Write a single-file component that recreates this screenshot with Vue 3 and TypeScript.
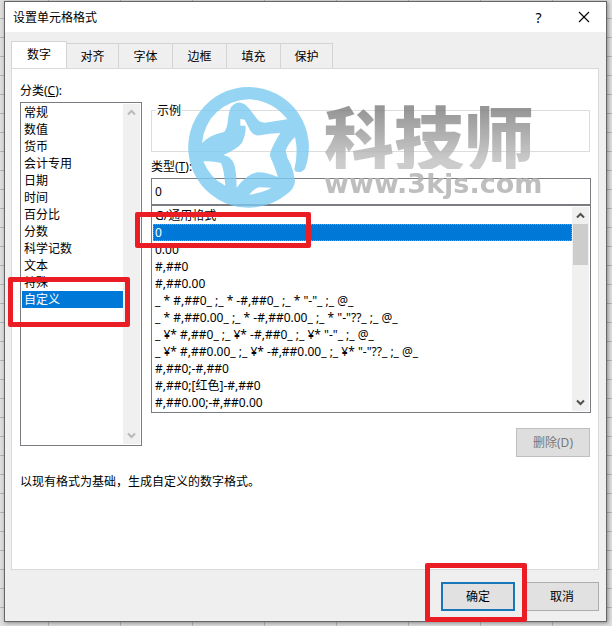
<script setup lang="ts">
import { ref } from 'vue'

const tabs: string[] = ['数字', '对齐', '字体', '边框', '填充', '保护']
const categories: string[] = [
  '常规', '数值', '货币', '会计专用', '日期', '时间',
  '百分比', '分数', '科学记数', '文本', '特殊', '自定义',
]
const formats: string[] = [
  'G/通用格式',
  '0',
  '0.00',
  '#,##0',
  '#,##0.00',
  '_ * #,##0_ ;_ * -#,##0_ ;_ * "-"_ ;_ @_ ',
  '_ * #,##0.00_ ;_ * -#,##0.00_ ;_ * "-"??_ ;_ @_ ',
  '_ ¥* #,##0_ ;_ ¥* -#,##0_ ;_ ¥* "-"_ ;_ @_ ',
  '_ ¥* #,##0.00_ ;_ ¥* -#,##0.00_ ;_ ¥* "-"??_ ;_ @_ ',
  '#,##0;-#,##0',
  '#,##0;[红色]-#,##0',
  '#,##0.00;-#,##0.00',
]

const activeTab = ref('数字')
const category = ref('自定义')
const format = ref('0')
</script>

<template>
  <div class="sheet">
    <section class="dialog" role="dialog" aria-labelledby="dialog-title">
      <header class="titlebar">
        <h1 id="dialog-title">设置单元格格式</h1>
        <button type="button" class="caption help">?</button>
        <button type="button" class="caption" aria-label="关闭">
          <svg width="12" height="12" viewBox="0 0 12 12"><path d="M1 1 11 11M11 1 1 11" /></svg>
        </button>
      </header>

      <div class="body">
        <div class="tabs" role="tablist">
          <button
            v-for="tab in tabs"
            :key="tab"
            type="button"
            role="tab"
            class="tab"
            :class="{ active: tab === activeTab }"
            :aria-selected="tab === activeTab"
            @click="activeTab = tab"
          >{{ tab }}</button>
        </div>

        <div class="panel" role="tabpanel">
          <div class="columns">
            <div class="left">
              <span id="cat-label" class="cat-label">分类(<u>C</u>):</span>
              <div class="listbox categories">
                <ul role="listbox" aria-labelledby="cat-label" tabindex="0">
                  <li
                    v-for="item in categories"
                    :key="item"
                    role="option"
                    :class="{ selected: item === category }"
                    :aria-selected="item === category"
                    @click="category = item"
                  >{{ item }}</li>
                </ul>
                <div class="scroll idle">
                  <button type="button" aria-label="向上滚动"><svg width="9" height="7" viewBox="0 0 9 7"><path d="M1 5.500 4.500 2 8 5.500" /></svg></button>
                  <button type="button" aria-label="向下滚动"><svg width="9" height="7" viewBox="0 0 9 7"><path d="M1 1.500 4.500 5 8 1.500" /></svg></button>
                </div>
                <div class="mark mark-category"></div>
              </div>
            </div>

            <div class="right">
              <fieldset class="sample"><legend>示例</legend></fieldset>
              <label class="type-label" for="type-input">类型(<u>T</u>):</label>
              <input id="type-input" v-model="format" class="type-input" type="text" />
              <div class="listbox formats">
                <ul role="listbox" aria-label="类型" tabindex="0">
                  <li
                    v-for="item in formats"
                    :key="item"
                    role="option"
                    :class="{ selected: item === format }"
                    :aria-selected="item === format"
                    @click="format = item"
                  >{{ item }}</li>
                </ul>
                <div class="scroll">
                  <button type="button" aria-label="向上滚动"><svg width="9" height="7" viewBox="0 0 9 7"><path d="M1 5.500 4.500 2 8 5.500" /></svg></button>
                  <div class="thumb"></div>
                  <button type="button" aria-label="向下滚动"><svg width="9" height="7" viewBox="0 0 9 7"><path d="M1 1.500 4.500 5 8 1.500" /></svg></button>
                </div>
                <div class="mark mark-format"></div>
              </div>
              <button type="button" class="btn delete" disabled>删除(D)</button>

              <div class="watermark" aria-hidden="true">
                <svg class="logo" viewBox="0 0 384 384">
                  <path
                    fill-rule="evenodd"
                    d="M357 260Q348 271 336 270Q327 270 325 263Q334 225 331 190L327 165Q306 185 299 206Q302 228 314 247Q324 270 327 298Q325 322 300 338A181 181 0 1 1 357 260Z
                       M48 183A142 142 0 0 1 188 52Q258 54 304 112L236 122Q222 122 214 112L190 80Q165 50 142 68Q130 76 127 105Q124 145 112 151Q75 157 48 183Z
                       M163 111V131H178Q182 150 168 182Q155 200 112 219Q138 225 145 248Q151 265 152 317Q185 274 215 271Q240 270 276 285Q266 254 252 222Q250 206 283 153Q250 154 222 160Q204 162 193 146L176 113Z
                       M52 238Q80 236 105 243Q114 262 118 311Q72 289 52 238Z
                       M190 338Q205 317 222 316L256 317Q238 330 190 338Z"
                  />
                </svg>
                <div class="wordmark">
                  <span class="brand">科技师</span>
                  <span class="site">www.3kjs.com</span>
                </div>
              </div>
            </div>
          </div>
          <p class="hint">以现有格式为基础，生成自定义的数字格式。</p>
        </div>

        <footer class="actions">
          <div class="ok-wrap">
            <button type="button" class="btn primary">确定</button>
            <div class="mark mark-ok"></div>
          </div>
          <button type="button" class="btn cancel">取消</button>
        </footer>
      </div>
    </section>
  </div>
</template>

<style>
body {
  margin: 0;
}
</style>

<style scoped>
* {
  box-sizing: border-box;
}

.sheet {
  display: flex;
  min-height: 100vh;
  padding: 1px 5px 4px 4px;
  background-color: #dedede;
  background-image:
    linear-gradient(to right, #b4b4b4 1px, transparent 1px),
    linear-gradient(#b4b4b4 1px, transparent 1px);
  background-size: 72px 19px;
  background-position: 48px 18px;
  color: #000;
  font: 12px/17px "Noto Sans", "Noto Sans CJK SC", sans-serif;
}

button,
input {
  font: inherit;
  color: inherit;
}

.dialog {
  flex: 1;
  display: flex;
  flex-direction: column;
  min-width: 0;
  border: 1px solid #666;
  background: #efefef;
  box-shadow: 1px 1px 4px rgba(0, 0, 0, 0.4);
}

.titlebar {
  display: flex;
  align-items: center;
  height: 30px;
  padding-left: 8px;
  background: #fff;
}

.titlebar h1 {
  flex: 1;
  margin: 0;
  font: inherit;
}

.caption {
  display: grid;
  place-items: center;
  width: 45px;
  height: 30px;
  padding: 0;
  border: 0;
  background: transparent;
}

.help {
  font-size: 14px;
}

.caption path {
  fill: none;
  stroke: #000;
  stroke-width: 1.1;
}

.body {
  flex: 1;
  display: flex;
  flex-direction: column;
  padding: 9px 7px 10px 6px;
}

.tabs {
  display: flex;
  align-items: flex-end;
  margin-bottom: -1px;
}

.tab {
  width: 54px;
  height: 26px;
  padding: 0;
  border: 1px solid #d4d4d4;
  border-left-width: 0;
  background: #efefef;
}

.tab.active {
  width: 56px;
  height: 28px;
  padding-bottom: 1px;
  border-left-width: 1px;
  border-bottom-color: #fff;
  background: #fff;
}

.tab:nth-child(2),
.tab:last-child {
  width: 52px;
}

.panel {
  flex: 1;
  padding: 13px 7px 12px 8px;
  border: 1px solid #d9d9d9;
  background: #fff;
}

.columns {
  display: flex;
  gap: 9px;
}

.left {
  display: flex;
  flex-direction: column;
  width: 122px;
}

.cat-label {
  margin-bottom: 3px;
}

.right {
  position: relative;
  flex: 1;
  display: flex;
  flex-direction: column;
  min-width: 0;
  padding-top: 20px;
}

.listbox {
  position: relative;
  display: flex;
  padding: 1px;
  border: 1px solid #7a7c82;
  background: #fff;
}

.listbox ul {
  flex: 1;
  min-width: 0;
  margin: 0;
  padding: 0;
  outline: 0;
  list-style: none;
}

.listbox li {
  height: 17px;
  padding-left: 2px;
  white-space: pre;
  overflow: hidden;
  cursor: default;
}

.listbox li.selected {
  background: #0078d7;
  color: #fff;
}

.formats li.selected {
  outline: 1px dotted #c98a4a;
  outline-offset: -1px;
}

.categories {
  height: 344px;
}

.formats {
  height: 208px;
}

.scroll {
  display: flex;
  flex-direction: column;
  width: 17px;
  background: #f0f0f0;
}

.scroll button {
  display: grid;
  place-items: center;
  height: 17px;
  padding: 0;
  border: 0;
  background: transparent;
}

.scroll button:last-child {
  margin-top: auto;
}

.scroll path {
  fill: none;
  stroke: #505050;
  stroke-width: 2;
}

.scroll.idle path {
  stroke: #b9b9b9;
}

.thumb {
  height: 41px;
  margin: 0 1px;
  background: #cdcdcd;
}

.sample {
  height: 50px;
  margin: 0 1px 0 0;
  padding: 0;
  border: 1px solid #dcdcdc;
}

.sample legend {
  margin-left: 4px;
  padding: 0 1px;
}

.type-label {
  margin: 6px 0 3px;
}

.type-input {
  width: 100%;
  height: 27px;
  padding: 0 3px;
  border: 1px solid #7a7c82;
  border-radius: 0;
  outline: 0;
  background: #fff;
}

.btn {
  width: 74px;
  height: 29px;
  padding: 0;
  border: 1px solid #adadad;
  background: #e1e1e1;
}

.btn.delete {
  align-self: flex-end;
  margin: 15px 1px 0 0;
  border-color: #bfbfbf;
  background: #dedede;
  color: #777;
}

.btn.primary {
  border: 2px solid #1976b9;
}

.hint {
  margin: 16px 0 0;
}

.actions {
  display: flex;
  justify-content: flex-end;
  gap: 10px;
  padding-top: 12px;
}

.ok-wrap {
  position: relative;
}

.mark {
  position: absolute;
  border: 5px solid #ea1c24;
  border-radius: 2px;
  pointer-events: none;
}

.mark-category {
  top: 174px;
  left: -13px;
  width: 122px;
  height: 50px;
}

.mark-format {
  top: 6px;
  left: -17px;
  width: 176px;
  height: 36px;
}

.mark-ok {
  top: -19px;
  left: -16px;
  width: 102px;
  height: 59px;
}

.watermark {
  position: absolute;
  top: 0;
  left: 35px;
  display: flex;
  gap: 10px;
  pointer-events: none;
}

.logo {
  width: 128px;
  height: 128px;
  fill: #7ccaf2;
  opacity: 0.8;
}

.wordmark {
  display: flex;
  flex-direction: column;
  padding-top: 21px;
  opacity: 0.85;
}

.brand {
  font: 900 70px/66px "Noto Sans CJK SC", sans-serif;
  color: transparent;
  background: linear-gradient(#858585 10%, #c4c4c4 90%);
  background-clip: text;
}

.site {
  font: 700 27px/30px "DejaVu Sans", sans-serif;
  color: #b3b3b3;
}
</style>
